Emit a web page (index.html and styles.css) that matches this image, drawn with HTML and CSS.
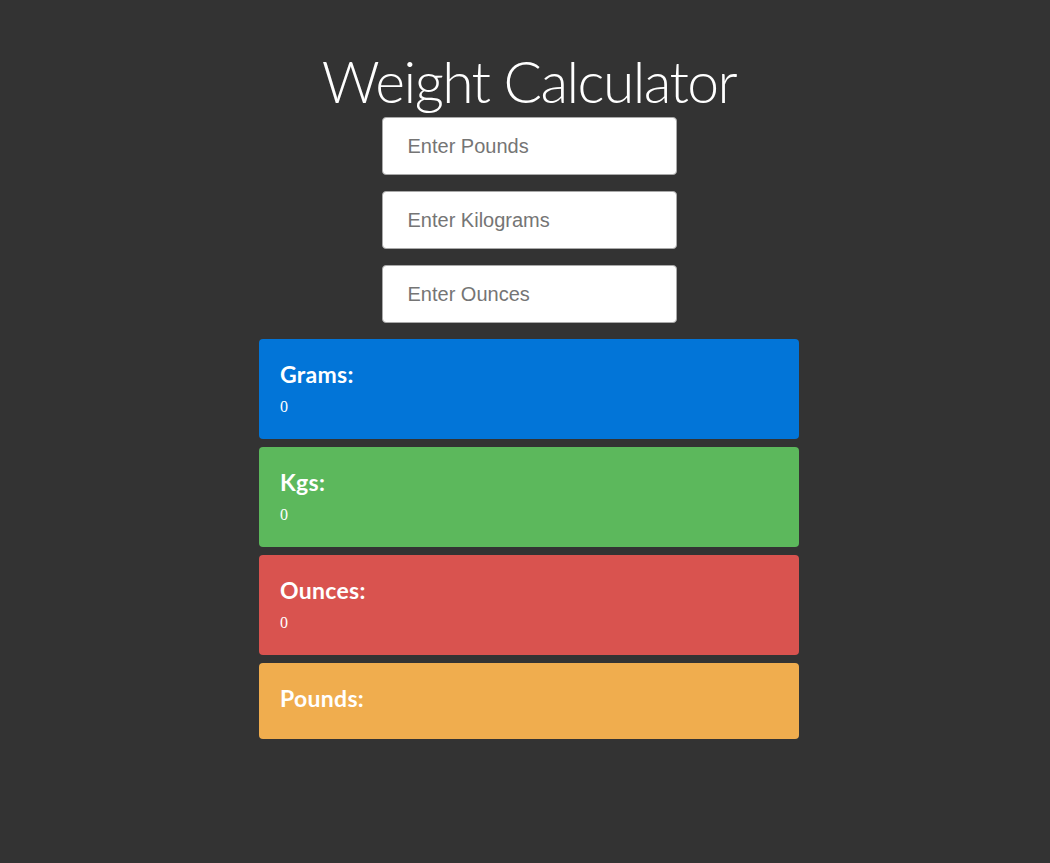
FILE: index.html
```html
<!DOCTYPE html>
<html>
<head>
<meta charset="utf-8">
<title>Weight Calculator</title>
<link rel="stylesheet" href="styles.css">
</head>
<body>
<main class="app">
  <h1 class="title">Weight Calculator</h1>
  <form class="inputs">
    <input class="field" type="text" placeholder="Enter Pounds">
    <input class="field" type="text" placeholder="Enter Kilograms">
    <input class="field" type="text" placeholder="Enter Ounces">
  </form>
  <section class="cards">
    <div class="card card-blue">
      <h4 class="card-title">Grams:</h4>
      <p class="card-value">0</p>
    </div>
    <div class="card card-green">
      <h4 class="card-title">Kgs:</h4>
      <p class="card-value">0</p>
    </div>
    <div class="card card-red">
      <h4 class="card-title">Ounces:</h4>
      <p class="card-value">0</p>
    </div>
    <div class="card card-orange">
      <h4 class="card-title">Pounds:</h4>
    </div>
  </section>
</main>
</body>
</html>
```
FILE: styles.css
```css
html, body {
  margin: 0;
  padding: 0;
  background: #333333;
  height: 100%;
}
body {
  font-family: "Liberation Serif", serif;
  color: #fff;
}
.app {
  display: flex;
  flex-direction: column;
  align-items: center;
  padding: 48px 0 0 8px;
}
.title {
  margin: 0 0 3px;
  font-family: Lato, "Open Sans", sans-serif;
  font-weight: 300;
  font-size: 57px;
  letter-spacing: -1.55px;
  line-height: 66px;
  color: #fff;
}
.inputs {
  display: flex;
  flex-direction: column;
  gap: 16px;
  margin: 0 0 16px;
}
.field {
  box-sizing: border-box;
  width: 295px;
  height: 58px;
  padding: 0 25px;
  border: 1px solid #a9a9a9;
  border-radius: 4px;
  background: #fff;
  font-family: "Liberation Sans", Arial, sans-serif;
  font-size: 20px;
  color: #333;
  outline: none;
}
.field::placeholder {
  color: #757575;
}
.cards {
  display: flex;
  flex-direction: column;
  gap: 8px;
  width: 540px;
}
.card {
  padding: 20px 21px;
  border-radius: 4px;
}
.card-title {
  margin: 0 0 6px;
  font-family: Lato, "Open Sans", sans-serif;
  font-weight: 700;
  font-size: 23px;
  letter-spacing: 0.3px;
  line-height: 30px;
}
.card-value {
  margin: 0;
  font-size: 16px;
  line-height: 24px;
}
.card-blue { background: #0275d8; }
.card-green { background: #5cb85c; }
.card-red { background: #d9534f; }
.card-orange { background: #f0ad4e; }
```
